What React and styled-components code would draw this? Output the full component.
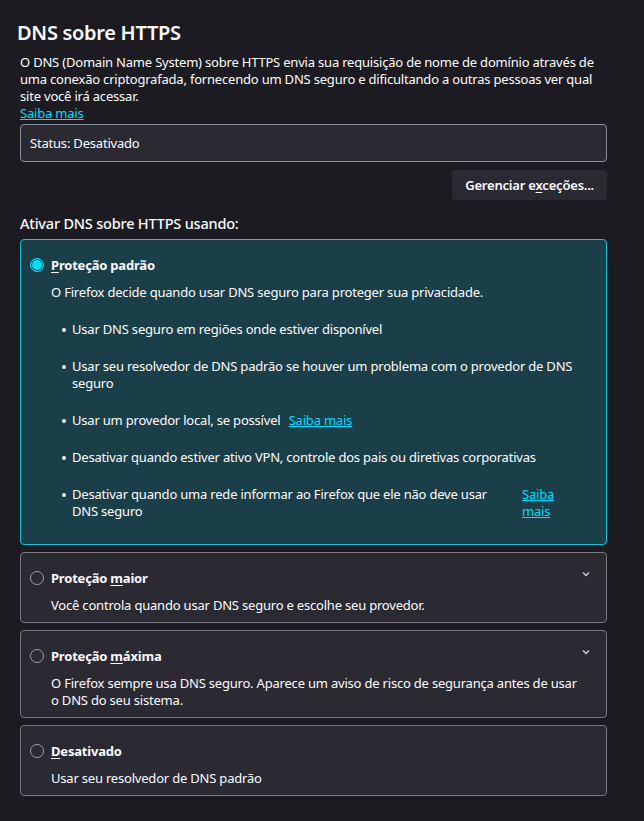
import styled, { createGlobalStyle, css } from 'styled-components';

const GlobalStyle = createGlobalStyle`
  * {
    box-sizing: border-box;
  }
  html, body {
    margin: 0;
    padding: 0;
    background: #1c1b22;
  }
  body {
    color: #fbfbfe;
    font-family: 'Noto Sans', 'Open Sans', sans-serif;
    font-size: 13px;
    line-height: 17px;
    letter-spacing: -0.2px;
  }
  ul, p, h1, h2 {
    margin: 0;
    padding: 0;
  }
`;

const Page = styled.div`
  width: 644px;
  min-height: 821px;
  padding: 20px 37px 24px 20px;
  background: #1c1b22;
`;

const Title = styled.h1`
  margin-left: -3px;
  font-size: 20px;
  line-height: 26px;
  font-weight: 600;
  letter-spacing: -0.3px;
`;

const Description = styled.p`
  margin-top: 8px;
  color: #fbfbfe;
`;

const Link = styled.a`
  color: #00ddff;
  text-decoration: underline;
  cursor: pointer;
`;

const BlockLink = styled(Link)`
  display: block;
  width: max-content;
`;

const StatusBox = styled.div`
  margin-top: 2px;
  height: 38px;
  display: flex;
  align-items: center;
  padding: 0 9px;
  background: #2b2a33;
  border: 1px solid #8f8f9d;
  border-radius: 4px;
`;

const ButtonRow = styled.div`
  display: flex;
  justify-content: flex-end;
  margin-top: 8px;
`;

const Button = styled.button`
  height: 30px;
  padding: 0 13px;
  border: none;
  border-radius: 4px;
  background: #2b2a33;
  color: #fbfbfe;
  font-family: inherit;
  font-size: 13px;
  font-weight: 600;
  letter-spacing: -0.2px;
`;

const SectionHeading = styled.h2`
  margin-top: 13px;
  font-size: 14.5px;
  line-height: 20px;
  font-weight: 500;
`;

const Options = styled.div`
  display: flex;
  flex-direction: column;
  gap: 7px;
  margin-top: 6px;
`;

const Card = styled.div`
  position: relative;
  padding: 15px 9px 8px 9px;
  border-radius: 4px;
  border: 1px solid ${p => (p.$selected ? '#12c2d8' : '#77767f')};
  background: ${p => (p.$selected ? '#1b3f49' : '#2b2a33')};
`;

const CardHeader = styled.div`
  display: flex;
  align-items: center;
  height: 20px;
`;

const Radio = styled.span`
  flex: none;
  width: 14px;
  height: 14px;
  border-radius: 50%;
  margin-right: 7px;
  ${p =>
    p.$checked
      ? css`
          border: 1px solid #00ddff;
          background: #00ddff;
          box-shadow: inset 0 0 0 1px #1b3f49;
        `
      : css`
          border: 1px solid #9f9ea6;
          background: transparent;
        `}
`;

const Label = styled.span`
  font-weight: 700;
  font-size: 13px;
  flex: 1;
`;

const Chevron = styled.svg`
  align-self: flex-start;
  margin-top: 1px;
  margin-right: 6px;
  width: 10px;
  height: 10px;
`;

const CardBody = styled.div`
  padding: 0 20px 0 21px;
  margin-top: 9px;
`;

const BulletList = styled.ul`
  list-style: none;
  margin-top: 20px;
  padding: 0 0 16px 11px;
  display: flex;
  flex-direction: column;
  gap: 20px;
`;

const Bullet = styled.li`
  position: relative;
  display: flex;
  padding-left: 10px;

  &::before {
    content: '';
    position: absolute;
    left: 0;
    top: 7px;
    width: 4px;
    height: 4px;
    border-radius: 50%;
    background: #fbfbfe;
  }
`;

const BulletText = styled.span`
  flex: ${p => (p.$narrow ? '0 0 440px' : '1')};
`;

const InlineLink = styled(Link)`
  margin-left: 5px;
`;

const SideLink = styled(Link)`
  margin-left: 10px;
  width: min-content;
`;

const Accel = styled.u`
  text-underline-offset: 2px;
`;

const ChevronIcon = () => (
  <Chevron viewBox="0 0 10 10">
    <path d="M2 3.5 L5 6.5 L8 3.5" fill="none" stroke="#cfcfd8" strokeWidth="1.4" />
  </Chevron>
);

export default function App() {
  return (
    <>
      <GlobalStyle />
      <Page>
        <Title>DNS sobre HTTPS</Title>
        <Description>
          O DNS (Domain Name System) sobre HTTPS envia sua requisição de nome de domínio através de
          uma conexão criptografada, fornecendo um DNS seguro e dificultando a outras pessoas ver qual
          site você irá acessar.
        </Description>
        <BlockLink>Saiba mais</BlockLink>
        <StatusBox>Status: Desativado</StatusBox>
        <ButtonRow>
          <Button>
            Gerenciar e<Accel>x</Accel>ceções...
          </Button>
        </ButtonRow>
        <SectionHeading>Ativar DNS sobre HTTPS usando:</SectionHeading>
        <Options>
          <Card $selected>
            <CardHeader>
              <Radio $checked />
              <Label>
                <Accel>P</Accel>roteção padrão
              </Label>
            </CardHeader>
            <CardBody>
              <p>O Firefox decide quando usar DNS seguro para proteger sua privacidade.</p>
              <BulletList>
                <Bullet>
                  <BulletText>Usar DNS seguro em regiões onde estiver disponível</BulletText>
                </Bullet>
                <Bullet>
                  <BulletText>
                    Usar seu resolvedor de DNS padrão se houver um problema com o provedor de DNS seguro
                  </BulletText>
                </Bullet>
                <Bullet>
                  <BulletText>
                    Usar um provedor local, se possível <InlineLink>Saiba mais</InlineLink>
                  </BulletText>
                </Bullet>
                <Bullet>
                  <BulletText>Desativar quando estiver ativo VPN, controle dos pais ou diretivas corporativas</BulletText>
                </Bullet>
                <Bullet>
                  <BulletText $narrow>
                    Desativar quando uma rede informar ao Firefox que ele não deve usar DNS seguro
                  </BulletText>
                  <SideLink>Saiba mais</SideLink>
                </Bullet>
              </BulletList>
            </CardBody>
          </Card>
          <Card>
            <CardHeader>
              <Radio />
              <Label>
                Proteção <Accel>m</Accel>aior
              </Label>
              <ChevronIcon />
            </CardHeader>
            <CardBody>
              <p>Você controla quando usar DNS seguro e escolhe seu provedor.</p>
            </CardBody>
          </Card>
          <Card>
            <CardHeader>
              <Radio />
              <Label>
                Proteção <Accel>m</Accel>áxima
              </Label>
              <ChevronIcon />
            </CardHeader>
            <CardBody>
              <p>
                O Firefox sempre usa DNS seguro. Aparece um aviso de risco de segurança antes de usar o
                DNS do seu sistema.
              </p>
            </CardBody>
          </Card>
          <Card>
            <CardHeader>
              <Radio />
              <Label>
                <Accel>D</Accel>esativado
              </Label>
            </CardHeader>
            <CardBody>
              <p>Usar seu resolvedor de DNS padrão</p>
            </CardBody>
          </Card>
        </Options>
      </Page>
    </>
  );
}
